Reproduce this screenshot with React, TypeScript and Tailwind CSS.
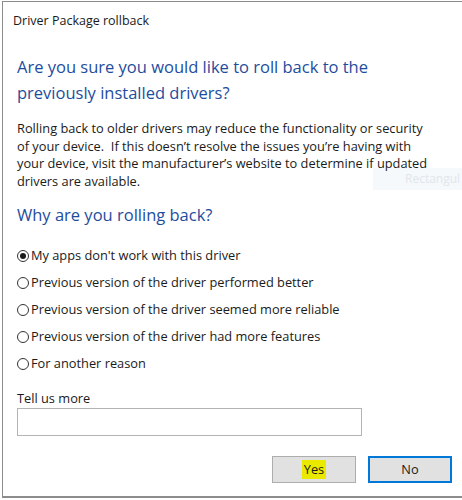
import React from 'react';

const font = { fontFamily: '"Open Sans", "Noto Sans", sans-serif' };

const reasons = [
  "My apps don't work with this driver",
  'Previous version of the driver performed better',
  'Previous version of the driver seemed more reliable',
  'Previous version of the driver had more features',
  'For another reason',
];

function Radio({ on }: { on: boolean }) {
  return (
    <span className="flex h-[12px] w-[12px] shrink-0 items-center justify-center rounded-full border border-[#333]">
      {on && <span className="h-[6px] w-[6px] rounded-full bg-[#1a1a1a]" />}
    </span>
  );
}

export default function App() {
  const [sel, setSel] = React.useState(0);
  return (
    <div className="relative h-[500px] w-[462px] overflow-hidden bg-white text-[#1a1a1a]" style={font}>
      {/* faint leftover tooltip behind the dialog text */}
      <div className="absolute left-[373px] top-[168px] flex h-[22px] w-[100px] items-center bg-[#f5f9fc] pl-[32px] text-[12px] text-[#e2e6ea]">
        Rectangul
      </div>

      <div className="relative ml-[2px] mt-[1px] flex h-[497px] flex-col border-l border-t border-b-2 border-[#8c8c8c]">
        <div className="flex h-[38px] items-center pl-[10px] text-[12.5px] leading-none">Driver Package rollback</div>

        <div className="pl-[14px] pr-[10px]">
          <h1 className="mt-[14px] text-[16.5px] leading-[26px] text-[#1e4d9e]">
            Are you sure you would like to roll back to the<br />previously installed drivers?
          </h1>
          <p className="mt-[14px] text-[12.8px] leading-[17.5px]">
            Rolling back to older drivers may reduce the functionality or security<br />
            of your device.&nbsp; If this doesn’t resolve the issues you’re having with<br />
            your device, visit the manufacturer’s website to determine if updated<br />
            drivers are available.
          </p>
          <h2 className="mt-[12px] text-[16.5px] leading-[25px] text-[#1e4d9e]">Why are you rolling back?</h2>

          <div className="mt-[15px] flex flex-col">
            {reasons.map((r, i) => (
              <label key={r} className="flex h-[27px] cursor-pointer items-center gap-[2px] text-[12.8px]" onClick={() => setSel(i)}>
                <Radio on={sel === i} />
                <span>{r}</span>
              </label>
            ))}
          </div>

          <div className="mt-[13px] text-[12.8px] leading-[16px]">Tell us more</div>
          <input className="mt-[2px] block h-[28px] w-[345px] border border-[#b4b4b4] px-1 text-[12px] outline-none" />

          <div className="mt-[20px] flex justify-end gap-[12px]">
            <button className="flex h-[27px] w-[84px] items-center justify-center border border-[#adadad] bg-[#e1e1e1] text-[12.8px]">
              <span className="bg-[#eaea00] px-[2px] py-[3px] leading-none">Yes</span>
            </button>
            <button className="flex h-[27px] w-[84px] items-center justify-center border-2 border-[#0078d7] bg-[#e1e1e1] text-[12.8px]">
              No
            </button>
          </div>
        </div>
      </div>
    </div>
  );
}
